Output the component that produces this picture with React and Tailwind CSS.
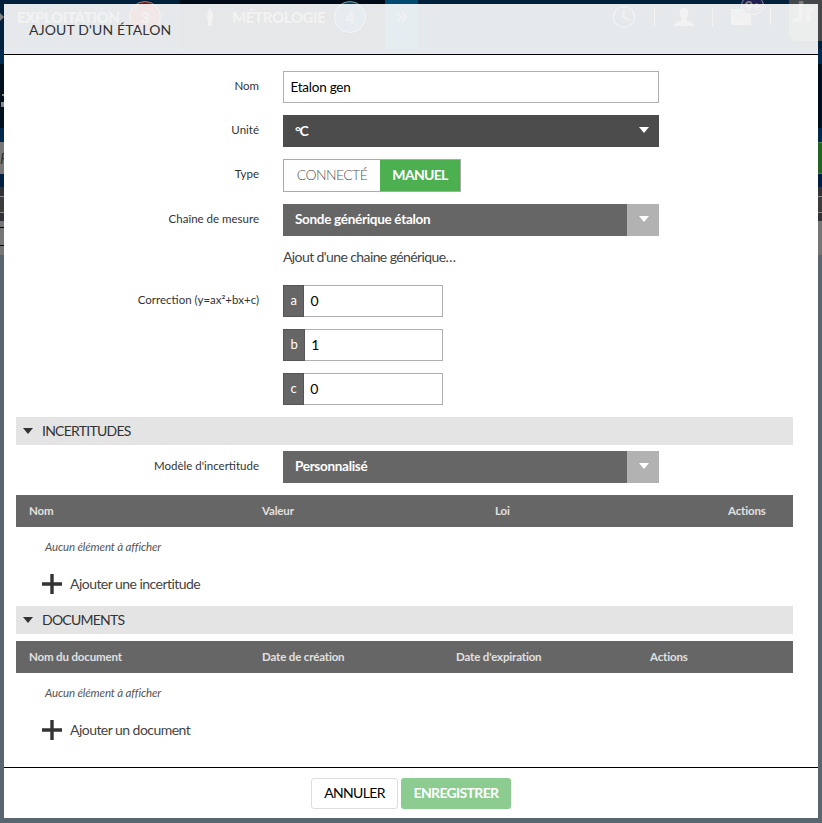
const coefficients = [
  { name: "a", value: "0" },
  { name: "b", value: "1" },
  { name: "c", value: "0" },
];

const Caret = ({ className }) => (
  <svg viewBox="0 0 10 6" className={`w-[10px] h-[6px] ${className}`} fill="currentColor">
    <path d="M0 0h10L5 6z" />
  </svg>
);

const Separator = () => <div className="w-px h-[18px] bg-[#888]" />;

const ClockIcon = () => (
  <svg viewBox="0 0 24 24" className="w-6 h-6 mr-[18px]" fill="none" stroke="currentColor" strokeWidth="1.2">
    <circle cx="12" cy="12" r="10.5" />
    <path d="M11.5 5v7l6 3.500" strokeWidth="2" />
  </svg>
);

const PersonIcon = () => (
  <svg viewBox="0 0 20 18" className="w-5 h-[18px] ml-[19px] mr-[18px]" fill="currentColor">
    <path d="M10 0c3 0 4.400 2 4.400 5 0 2.500-1 4.500-2.400 5.600v1.400c1 1.500 7.500 1.600 7.500 6H.5c0-4.400 6.500-4.500 7.500-6v-1.400C6.600 9.500 5.600 7.500 5.600 5c0-3 1.400-5 4.400-5z" />
  </svg>
);

const MailIcon = () => (
  <svg viewBox="0 0 20 16" className="w-5 h-4">
    <path d="M0 0h20v16H0z" fill="currentColor" />
    <path d="M0 1.500l10 8 10-8" fill="none" stroke="#404a52" strokeWidth="1.2" />
  </svg>
);

// dimmed application page, behind the modal
function Backdrop() {
  return (
    <div className="w-full h-full flex flex-col overflow-hidden">
      <div className="h-[49px] shrink-0 flex bg-[#00203c] text-[#808080] font-black text-[15px] tracking-[-0.4px]">
        <div className="w-[180px] flex items-start">
          <div className="w-[17px] h-[34px] flex items-center">
            <svg viewBox="0 0 5 10" className="w-[4px] h-[10px]" fill="currentColor">
              <path d="M0 0l5 5-5 5z" />
            </svg>
          </div>
          <span className="w-[112px] h-[34px] leading-[34px] whitespace-nowrap">EXPLOITATION</span>
          <span className="mt-px w-8 h-8 rounded-full border border-[#a08080] bg-[#7c1010] text-center leading-[30px]">
            3
          </span>
        </div>
        <div className="w-[205px] flex items-start bg-[#020b18]">
          <svg viewBox="0 0 6 18" className="ml-[27px] mt-2 w-[6px] h-[18px]" fill="currentColor">
            <path d="M3 0l2 4 1 4-1 6v4H1v-4L0 8l1-4z" />
          </svg>
          <span className="ml-[19px] w-[102px] h-[34px] leading-[34px] whitespace-nowrap">MÉTROLOGIE</span>
          <span className="mt-px w-8 h-8 rounded-full border border-[#7f9aa5] bg-[#08405c] text-center leading-[30px]">
            4
          </span>
        </div>
        <div className="w-[33px] h-[49px] bg-[#004a70] flex justify-center">
          <svg viewBox="0 0 12 12" className="mt-[11px] w-3 h-3" fill="none" stroke="currentColor" strokeWidth="2">
            <path d="M1 1l4 5-4 5M6 1l4 5-4 5" />
          </svg>
        </div>
        <div className="flex-1 h-[34px] flex items-center justify-end">
          <ClockIcon />
          <Separator />
          <PersonIcon />
          <Separator />
          <div className="relative ml-[18px] mr-[19px]">
            <MailIcon />
            <span className="absolute -top-[13px] left-[10px] w-[23px] h-[19px] rounded-full border border-[#888] bg-[#201f50] text-center text-sm leading-[17px]">
              9+
            </span>
          </div>
          <Separator />
          <div className="ml-[18px] w-[33px] h-[41px] pl-1 self-start rounded-bl-md bg-[#45484b] text-[28px] leading-[22px] overflow-hidden whitespace-nowrap">
            Jr
          </div>
        </div>
      </div>
      <div className="h-[15px] shrink-0 bg-[#002b50]" />
      <div className="h-16 shrink-0 bg-[#000f1d] flex flex-col justify-center">
        <div className="w-[2px] h-[2px] ml-[2px] mt-2 bg-[#888]" />
        <div className="w-[3px] h-[5px] ml-px mt-[6px] bg-[#888]" />
      </div>
      <div className="h-[14px] shrink-0 bg-[#00284c]" />
      <div className="h-8 shrink-0 flex justify-between bg-[#777]">
        <span className="text-[15px] italic leading-8 text-[#333]">F</span>
        <div className="w-10 bg-[#246326] border-y border-[#4f8650]" />
      </div>
      <div className="h-[13px] shrink-0 bg-[#001f42]" />
      <div className="h-[34px] shrink-0 bg-[#303235] flex flex-col justify-center">
        <div className="h-[17px] border-y border-[#888] bg-[#3c3c3c]" />
      </div>
      <div className="h-[34px] shrink-0 flex bg-[#767676]">
        <div className="w-10 h-[19px] mt-[6px] border-y border-black" />
      </div>
      <div className="flex-1 bg-[#59656f]" />
    </div>
  );
}

function FormRow({ label, children }) {
  return (
    <div className="flex items-start">
      <label className="w-[243px] mr-6 text-right text-[11.5px] leading-[30px]">{label}</label>
      {children}
    </div>
  );
}

function SplitSelect({ value }) {
  return (
    <div className="w-[376px] h-8 flex bg-[#666] text-white">
      <span className="flex-1 pl-3 text-[13.5px] leading-[31px] font-bold tracking-[-0.3px]">{value}</span>
      <div className="w-8 flex items-center justify-center bg-[#b2b2b2]">
        <Caret className="ml-px -mt-[2px]" />
      </div>
    </div>
  );
}

function SectionTitle({ children }) {
  return (
    <div className="h-7 flex items-center bg-[#e4e4e4] text-sm leading-7 tracking-[-0.75px]">
      <Caret className="ml-[7px] mr-[9px]" />
      {children}
    </div>
  );
}

function EmptyTable({ columns, addLabel }) {
  return (
    <div>
      <div className="h-8 flex bg-[#666] text-[#e0e0e0] text-[11.5px] leading-8 font-bold tracking-[-0.15px]">
        {columns.map((col) => (
          <div key={col.name} className={`pl-[13px] ${col.width}`}>
            {col.name}
          </div>
        ))}
      </div>
      <p className="pl-[29px] mt-3 h-[18px] text-[11.5px] leading-4 italic tracking-[-0.14px] text-[#555]">
        Aucun élément à afficher
      </p>
      <div className="flex items-center h-5 mt-[17px] pl-[26px] text-sm leading-5 tracking-[-0.54px] text-[#444]">
        <svg viewBox="0 0 20 20" className="w-5 h-5 mr-2" stroke="#333" strokeWidth="3.4">
          <path d="M0 10h20M10 0v20" />
        </svg>
        {addLabel}
      </div>
    </div>
  );
}

export default function App() {
  return (
    <div className="relative w-[822px] h-[823px] overflow-hidden font-['Lato',sans-serif] text-[#333]">
      <Backdrop />

      <div className="absolute inset-x-1 top-1 bottom-[5px] flex flex-col">
        <header className="h-[51px] shrink-0 pl-[25px] border-b border-black bg-white/90 text-sm leading-[52px] tracking-[0.15px]">
          AJOUT D'UN ÉTALON
        </header>

        <main className="flex-1 bg-white pt-4 pl-3 pr-[25px]">
          <div className="flex flex-col gap-3">
            <FormRow label="Nom">
              <input
                className="w-[376px] h-8 px-[6.5px] border border-[#b0b0b0] text-[13.5px] tracking-[-0.25px] text-black"
                defaultValue="Etalon gen"
              />
            </FormRow>
            <FormRow label="Unité">
              <div className="w-[376px] h-8 pl-3 pr-[10px] flex items-center justify-between bg-[#4c4c4c] text-white text-sm font-bold">
                <span className="tracking-[-1.2px]">°C</span>
                <Caret className="-mt-[2px]" />
              </div>
            </FormRow>
            <FormRow label="Type">
              <div className="h-[33px] flex border border-[#aaa] text-sm leading-[30px]">
                <span className="w-[96px] text-center text-[#555] font-light tracking-[-0.6px]">CONNECTÉ</span>
                <span className="w-20 text-center bg-[#4caf50] text-white font-bold tracking-[-0.7px]">MANUEL</span>
              </div>
            </FormRow>
            <FormRow label="Chaîne de mesure">
              <SplitSelect value="Sonde générique étalon" />
            </FormRow>
          </div>
          <p className="ml-[267px] mt-3 h-[37px] text-sm leading-[18px] tracking-[-0.6px] text-[#444]">
            Ajout d'une chaine générique…
          </p>
          <FormRow label="Correction (y=ax²+bx+c)">
            <div className="flex flex-col gap-3">
              {coefficients.map((c) => (
                <div key={c.name} className="w-40 h-8 flex">
                  <span className="px-[6.5px] border border-[#555] bg-[#666] text-white text-[13px] leading-[29px]">
                    {c.name}
                  </span>
                  <input
                    className="flex-1 min-w-0 px-[6px] border border-l-0 border-[#b0b0b0] text-sm text-black"
                    defaultValue={c.value}
                  />
                </div>
              ))}
            </div>
          </FormRow>

          <div className="mt-3 mb-[6px]">
            <SectionTitle>INCERTITUDES</SectionTitle>
          </div>
          <FormRow label="Modèle d'incertitude">
            <SplitSelect value="Personnalisé" />
          </FormRow>
          <div className="mt-3">
            <EmptyTable
              addLabel="Ajouter une incertitude"
              columns={[
                { name: "Nom", width: "w-[233px]" },
                { name: "Valeur", width: "w-[233px]" },
                { name: "Loi", width: "w-[233px]" },
                { name: "Actions", width: "w-[78px]" },
              ]}
            />
          </div>

          <div className="mt-3 mb-[7px]">
            <SectionTitle>DOCUMENTS</SectionTitle>
          </div>
          <EmptyTable
            addLabel="Ajouter un document"
            columns={[
              { name: "Nom du document", width: "w-[233px]" },
              { name: "Date de création", width: "w-[194px]" },
              { name: "Date d'expiration", width: "w-[194px]" },
              { name: "Actions", width: "w-[156px]" },
            ]}
          />
        </main>

        <footer className="h-[51px] shrink-0 flex justify-center gap-[3px] pt-[10px] border-t border-black bg-white text-sm leading-[28px] tracking-[-0.65px]">
          <button className="w-[87px] h-[31px] pb-px rounded-[3px] border border-[#ddd] text-black">ANNULER</button>
          <button className="w-[110px] h-[31px] pb-px rounded-[3px] bg-[#8dcc90] text-white font-bold">ENREGISTRER</button>
        </footer>
      </div>
    </div>
  );
}
